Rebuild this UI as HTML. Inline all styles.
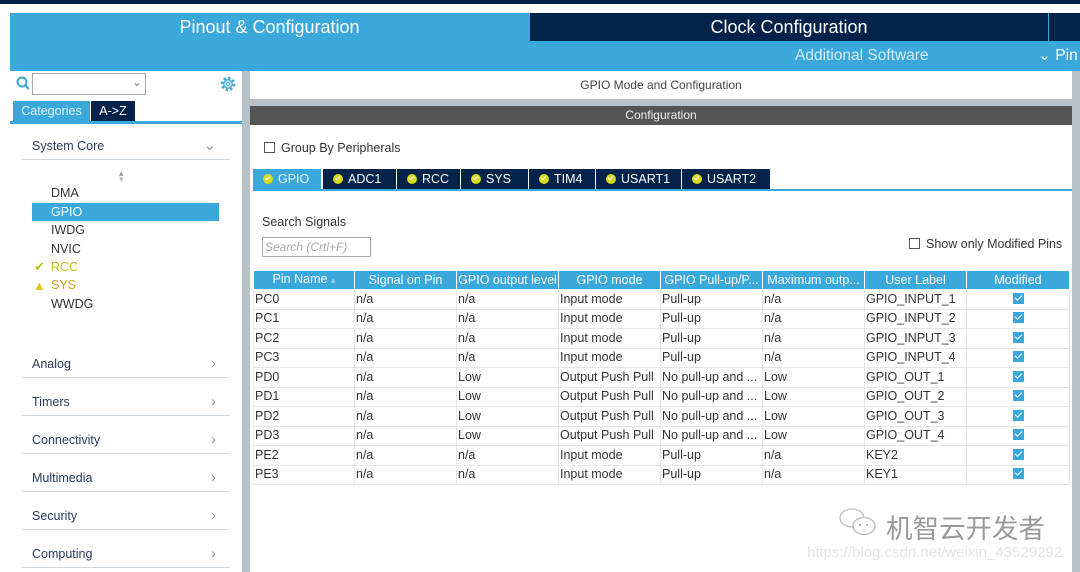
<!DOCTYPE html>
<html><head><meta charset="utf-8"><style>
*{margin:0;padding:0;box-sizing:border-box}
body{width:1080px;height:572px;overflow:hidden;background:#fff;font-family:"Liberation Sans","Noto Sans CJK SC",sans-serif;position:relative;font-size:12px;color:#333}
.a{position:absolute}
.navy{background:#03234b}
.lb{background:#3aa8db}
.cat{position:absolute;left:22px;width:208px;border-bottom:1px solid #cfd6dc;height:24px;font-size:12.5px;color:#2b3a5c;padding-left:10px;line-height:20px}
.cat span{position:absolute;right:14px;top:0;color:#999;font-size:15px;font-weight:300}
.tab{position:absolute;top:169px;height:20px;background:#03234b;color:#fff;font-size:12.5px;line-height:20px;padding-left:10px;border-right:1px solid #fff}
.dot{display:inline-block;width:10px;height:10px;border-radius:50%;background:#d7d91a;margin-right:5px;vertical-align:-1px;position:relative}
.dot:after{content:"";position:absolute;left:2px;top:2px;width:4px;height:2px;border-left:1.5px solid #fff;border-bottom:1.5px solid #fff;transform:rotate(-45deg)}
table{position:absolute;left:253px;top:270px;border-collapse:collapse;font-size:12.5px}
td,th{height:19.5px;border:1px solid #e3e7ea;padding:0 1px;white-space:nowrap;overflow:hidden;text-align:left;font-weight:normal;line-height:17px}
th{background:#3aa8db;color:#fff;text-align:center;border:1px solid #fff;height:19px}
.cb{display:inline-block;width:11px;height:11px;background:#3aa8db;position:relative;vertical-align:-1px}
.cb:after{content:"";position:absolute;left:2px;top:2px;width:6px;height:3px;border-left:1.5px solid #fff;border-bottom:1.5px solid #fff;transform:rotate(-45deg)}
</style></head><body>
<div class="a navy" style="left:0;top:0;width:1080px;height:4px"></div>
<div class="a lb" style="left:10px;top:13px;width:1070px;height:58px"></div>
<div class="a" style="left:10px;top:13px;width:519px;height:28px;color:#fff;font-size:18px;text-align:center;line-height:28px">Pinout &amp; Configuration</div>
<div class="a navy" style="left:530px;top:13px;width:518px;height:28px;color:#fff;font-size:18px;text-align:center;line-height:28px">Clock Configuration</div>
<div class="a navy" style="left:1049px;top:13px;width:31px;height:28px"></div>
<div class="a" style="left:795px;top:47px;color:#d5ecf8;font-size:15.5px">Additional Software</div>
<div class="a" style="left:1038px;top:46px;color:#fff;font-size:15.5px">⌄ Pin</div>
<div class="a" style="left:242px;top:71px;width:8px;height:501px;background:#b7c2c8"></div>
<div class="a" style="left:1072px;top:71px;width:8px;height:501px;background:#b7c2c8"></div>
<svg class="a" style="left:16px;top:76px" width="16" height="16"><circle cx="6" cy="6" r="4.5" fill="none" stroke="#3aa8db" stroke-width="2"/><line x1="9" y1="9" x2="13" y2="13" stroke="#3aa8db" stroke-width="2"/></svg>
<div class="a" style="left:32px;top:73px;width:114px;height:22px;border:1px solid #aaa"></div>
<div class="a" style="left:132px;top:75px;color:#888;font-size:12px">⌄</div>
<svg class="a" style="left:219px;top:75px" width="18" height="18"><circle cx="9" cy="9" r="6" fill="none" stroke="#3aa8db" stroke-width="2.5" stroke-dasharray="2.4 2.3"/><circle cx="9" cy="9" r="4.2" fill="none" stroke="#3aa8db" stroke-width="1.3"/><circle cx="9" cy="9" r="1.7" fill="none" stroke="#3aa8db" stroke-width="1.2"/></svg>
<div class="a lb" style="left:13px;top:101px;width:77px;height:20px;color:#e4f3fb;font-size:12.5px;line-height:20px;text-align:center">Categories</div>
<div class="a navy" style="left:91px;top:101px;width:44px;height:20px;color:#fff;font-size:12.5px;line-height:20px;text-align:center">A-&gt;Z</div>
<div class="a lb" style="left:10px;top:121px;width:232px;height:3px"></div>
<div class="cat" style="top:136px">System Core<span>⌄</span></div>
<div class="a" style="left:119px;top:168px;color:#999;font-size:9px">▴</div>
<div class="a" style="left:119px;top:174px;color:#bbb;font-size:9px">▾</div>
<div class="a" style="left:51px;top:186px;font-size:12.5px">DMA</div>
<div class="a lb" style="left:32px;top:203px;width:187px;height:18px;color:#fff;font-size:12.5px;line-height:18px;padding-left:19px">GPIO</div>
<div class="a" style="left:51px;top:223px;font-size:12.5px">IWDG</div>
<div class="a" style="left:51px;top:242px;font-size:12.5px">NVIC</div>
<div class="a" style="left:34px;top:259px;font-size:13px;color:#b9c21a">✔</div>
<div class="a" style="left:51px;top:260px;font-size:12.5px;color:#b9c21a">RCC</div>
<div class="a" style="left:33px;top:278px;font-size:13px;color:#e8c41a">▲</div>
<div class="a" style="left:51px;top:278px;font-size:12.5px;color:#c9a81a">SYS</div>
<div class="a" style="left:51px;top:297px;font-size:12.5px">WWDG</div>
<div class="cat" style="top:354px">Analog<span>›</span></div>
<div class="cat" style="top:392px">Timers<span>›</span></div>
<div class="cat" style="top:430px">Connectivity<span>›</span></div>
<div class="cat" style="top:468px">Multimedia<span>›</span></div>
<div class="cat" style="top:506px">Security<span>›</span></div>
<div class="cat" style="top:544px">Computing<span>›</span></div>
<div class="a" style="left:250px;top:71px;width:822px;height:28px;text-align:center;line-height:28px;font-size:12px;color:#444">GPIO Mode and Configuration</div>
<div class="a" style="left:250px;top:99px;width:822px;height:7px;background:#b7c2c8"></div>
<div class="a" style="left:250px;top:106px;width:822px;height:19px;background:#555;color:#eee;text-align:center;line-height:19px;font-size:12px">Configuration</div>
<div class="a" style="left:264px;top:142px;width:11px;height:11px;border:1px solid #555"></div>
<div class="a" style="left:281px;top:141px;font-size:12.5px">Group By Peripherals</div>
<div class="tab" style="left:253px;width:69px;background:#3aa8db;color:#e8f5fc"><i class="dot"></i>GPIO</div>
<div class="tab" style="left:323px;width:74px"><i class="dot"></i>ADC1</div>
<div class="tab" style="left:397px;width:64px"><i class="dot"></i>RCC</div>
<div class="tab" style="left:461px;width:68px"><i class="dot"></i>SYS</div>
<div class="tab" style="left:529px;width:67px"><i class="dot"></i>TIM4</div>
<div class="tab" style="left:596px;width:86px"><i class="dot"></i>USART1</div>
<div class="tab" style="left:682px;width:89px"><i class="dot"></i>USART2</div>
<div class="a lb" style="left:253px;top:189px;width:819px;height:2px"></div>
<div class="a" style="left:262px;top:215px;font-size:12.5px">Search Signals</div>
<div class="a" style="left:262px;top:237px;width:109px;height:20px;border:1px solid #aaa;color:#aaa;font-style:italic;font-size:12px;line-height:18px;padding-left:2px">Search (Crtl+F)</div>
<div class="a" style="left:909px;top:238px;width:11px;height:11px;border:1px solid #555"></div>
<div class="a" style="left:926px;top:237px;font-size:12.5px">Show only Modified Pins</div>
<table>
<colgroup><col style="width:101px"><col style="width:102px"><col style="width:102px"><col style="width:102px"><col style="width:102px"><col style="width:102px"><col style="width:102px"><col style="width:103px"></colgroup>
<tr><th>Pin Name <span style="color:#9fd0ea;font-size:9px">▴</span></th><th>Signal on Pin</th><th>GPIO output level</th><th>GPIO mode</th><th>GPIO Pull-up/P...</th><th>Maximum outp...</th><th>User Label</th><th>Modified</th></tr>
<tr><td>PC0</td><td>n/a</td><td>n/a</td><td>Input mode</td><td>Pull-up</td><td>n/a</td><td>GPIO_INPUT_1</td><td style="text-align:center"><i class="cb"></i></td></tr>
<tr><td>PC1</td><td>n/a</td><td>n/a</td><td>Input mode</td><td>Pull-up</td><td>n/a</td><td>GPIO_INPUT_2</td><td style="text-align:center"><i class="cb"></i></td></tr>
<tr><td>PC2</td><td>n/a</td><td>n/a</td><td>Input mode</td><td>Pull-up</td><td>n/a</td><td>GPIO_INPUT_3</td><td style="text-align:center"><i class="cb"></i></td></tr>
<tr><td>PC3</td><td>n/a</td><td>n/a</td><td>Input mode</td><td>Pull-up</td><td>n/a</td><td>GPIO_INPUT_4</td><td style="text-align:center"><i class="cb"></i></td></tr>
<tr><td>PD0</td><td>n/a</td><td>Low</td><td>Output Push Pull</td><td>No pull-up and ...</td><td>Low</td><td>GPIO_OUT_1</td><td style="text-align:center"><i class="cb"></i></td></tr>
<tr><td>PD1</td><td>n/a</td><td>Low</td><td>Output Push Pull</td><td>No pull-up and ...</td><td>Low</td><td>GPIO_OUT_2</td><td style="text-align:center"><i class="cb"></i></td></tr>
<tr><td>PD2</td><td>n/a</td><td>Low</td><td>Output Push Pull</td><td>No pull-up and ...</td><td>Low</td><td>GPIO_OUT_3</td><td style="text-align:center"><i class="cb"></i></td></tr>
<tr><td>PD3</td><td>n/a</td><td>Low</td><td>Output Push Pull</td><td>No pull-up and ...</td><td>Low</td><td>GPIO_OUT_4</td><td style="text-align:center"><i class="cb"></i></td></tr>
<tr><td>PE2</td><td>n/a</td><td>n/a</td><td>Input mode</td><td>Pull-up</td><td>n/a</td><td>KEY2</td><td style="text-align:center"><i class="cb"></i></td></tr>
<tr><td>PE3</td><td>n/a</td><td>n/a</td><td>Input mode</td><td>Pull-up</td><td>n/a</td><td>KEY1</td><td style="text-align:center"><i class="cb"></i></td></tr>
</table>
<svg class="a" style="left:838px;top:506px" width="44" height="34"><ellipse cx="14" cy="12" rx="12" ry="9" fill="#fff" stroke="#bbb" stroke-width="1.3"/><ellipse cx="26" cy="20" rx="11" ry="8.5" fill="#fff" stroke="#bbb" stroke-width="1.3"/><circle cx="22" cy="19" r="1" fill="#999"/><circle cx="29" cy="19" r="1" fill="#999"/></svg>
<div class="a" style="left:886px;top:507px;font-size:26.5px;color:#999">机智云开发者</div>
<div class="a" style="left:807px;top:544px;font-size:15px;color:#e4e4e4">https://blog.csdn.net/weixin_43529292</div>
</body></html>
